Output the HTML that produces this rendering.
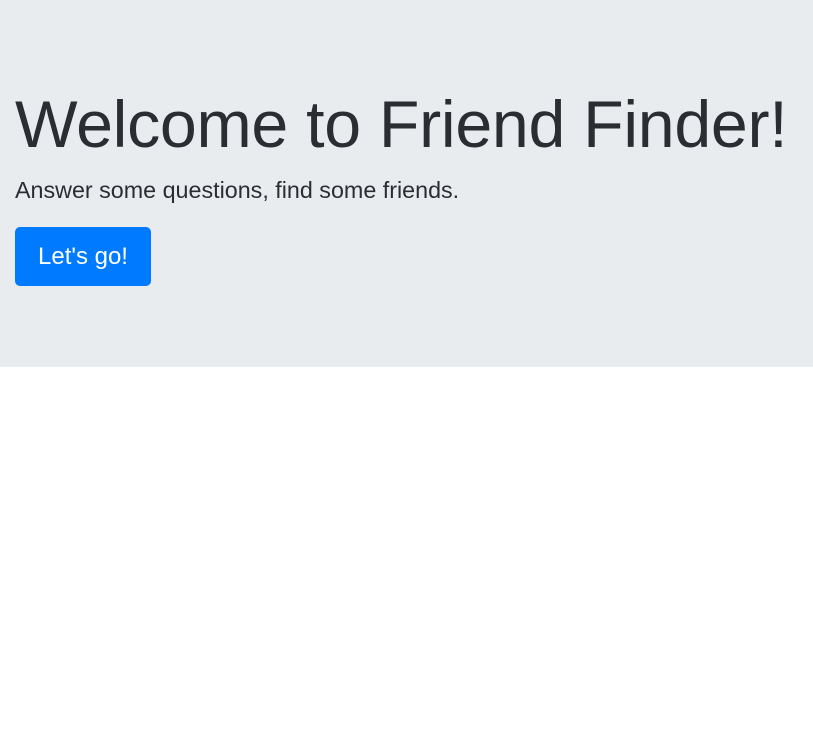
<!DOCTYPE html>
<html><head><style>
body{margin:0;width:813px;height:746px;background:#fff;font-family:"Liberation Sans",sans-serif;color:#212529;position:relative;overflow:hidden}
.j{position:absolute;left:0;top:0;width:813px;height:367px;background:#e9ecef}
h1{position:absolute;left:15px;top:80px;margin:0;font-size:66.3px;font-weight:300;line-height:90px;white-space:nowrap;color:#2a2e32;letter-spacing:-0.3px}
.lead{position:absolute;left:15px;top:175px;margin:0;font-size:23.3px;line-height:30px;font-weight:300;white-space:nowrap;color:#2a2e32}
.btn{position:absolute;left:15px;top:227px;width:136px;height:59px;background:#007bff;border-radius:5px;color:#fff;font-size:24px;line-height:59px;text-align:center}
</style></head><body>
<div class="j">
<h1>Welcome to Friend Finder!</h1>
<p class="lead">Answer some questions, find some friends.</p>
<div class="btn">Let's go!</div>
</div>
</body></html>
